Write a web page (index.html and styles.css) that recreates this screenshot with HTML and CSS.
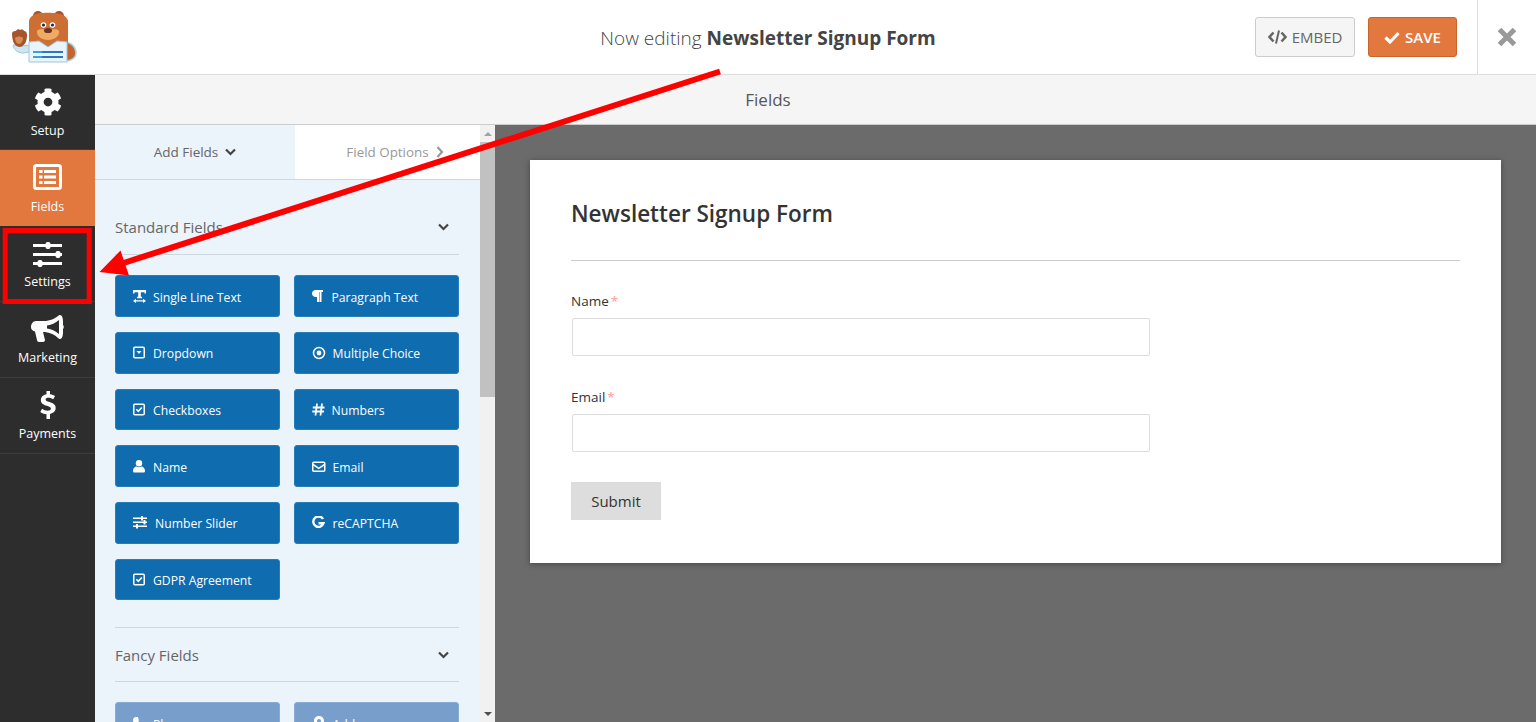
FILE: index.html
```html
<!DOCTYPE html>
<html lang="en">
<head>
    <meta charset="UTF-8">
    <meta name="viewport" content="width=device-width, initial-scale=1.0">
    <title>Newsletter Signup Form</title>
    <link rel="stylesheet" href="styles.css">
</head>
<body>

    <!-- Top bar -->
    <header class="topbar">
        <div class="logo">
            <svg width="96" height="74" viewBox="0 0 96 74">
                <path d="M64 42c8 0 12 6 12 11 0 5-5 8-11 8z" fill="#c4652f" stroke="#a9d3e2" stroke-width="1.5"/>
                <path d="M13 45l9 1 8-1 0 7-7 1c-5 0-9-3-10-8z" fill="#cfe6f0" stroke="#9cc8dc"/>
                <path d="M12 33c1-2 3-2 4-2 1-2 3-2 4-1 2-1 4 0 4 1 2 0 3 2 3 4 0 6-2 11-7 12-5 0-8-5-8-14z" fill="#a5542b"/>
                <path d="M15 38c2-2 6-2 8 0 0 3-2 6-4 6s-4-3-4-6z" fill="#d68a55"/>
                <circle cx="38" cy="16" r="5" fill="#a5542b"/>
                <circle cx="59" cy="16" r="5" fill="#a5542b"/>
                <path d="M34 15c3-3 24-3 29 0 2 1 5 4 5 6v27H29V21c0-2 2-5 5-6z" fill="#cd6f35"/>
                <path d="M37 31c3-3 7-1 11-1s8-2 11 1c1 5-5 9-11 9s-12-4-11-9z" fill="#eeab63"/>
                <circle cx="43.500" cy="25" r="2.800" fill="#fff"/>
                <circle cx="52.500" cy="25" r="2.800" fill="#fff"/>
                <circle cx="43.500" cy="25" r="1.600" fill="#2f2a33"/>
                <circle cx="52.500" cy="25" r="1.600" fill="#2f2a33"/>
                <ellipse cx="48" cy="30.500" rx="4" ry="2.600" fill="#6b3423"/>
                <path d="M29 42l10-1 9 6 9-6 10 1v20H29z" fill="#e8f4fa" stroke="#9cc8dc"/>
                <path d="M33 51h9v2h-9zM33 56h9v2h-9z" fill="#3f9ee0"/>
                <path d="M42 51h21v2H42zM42 56h21v2H42z" fill="#2a78bd"/>
            </svg>
        </div>
        <h1 class="editing">Now editing <strong>Newsletter Signup Form</strong></h1>
        <div class="top-actions">
            <a class="btn btn-embed">
                <svg width="19" height="14" viewBox="0 0 19 14"><path d="M5.500 2.500L1.500 7l4 4.500M13.500 2.500l4 4.500-4 4.500" fill="none" stroke="currentColor" stroke-width="2.500"/><path d="M11 0.500L8 13.500" fill="none" stroke="currentColor" stroke-width="2"/></svg>
                EMBED
            </a>
            <a class="btn btn-save">
                <svg width="16" height="13" viewBox="0 0 16 13"><path d="M1.500 6.500l4.500 4.500 8.500-9" fill="none" stroke="currentColor" stroke-width="3.200"/></svg>
                SAVE
            </a>
            <a class="close-btn">
                <svg width="20" height="20" viewBox="0 0 20 20"><path d="M2.500 2.500l15 15M17.500 2.500l-15 15" fill="none" stroke="currentColor" stroke-width="5"/></svg>
            </a>
        </div>
    </header>

    <div class="builder">

        <!-- Sidebar -->
        <nav class="sidebar">
            <a class="side-item">
                <svg width="28" height="28" viewBox="0 0 512 512"><path fill="currentColor" d="M487.4 315.7l-42.6-24.6c4.3-23.2 4.3-47 0-70.2l42.6-24.6c4.9-2.8 7.1-8.6 5.5-14-11.1-35.6-30-67.8-54.7-94.6-3.8-4.1-10-5.1-14.8-2.3L380.8 110c-17.9-15.4-38.5-27.3-60.8-35.1V25.8c0-5.6-3.9-10.5-9.4-11.7-36.7-8.2-74.3-7.8-109.2 0-5.5 1.2-9.4 6.1-9.4 11.7V75c-22.2 7.9-42.8 19.8-60.8 35.1L88.7 85.500c-4.9-2.8-11-1.900-14.800 2.300-24.700 26.700-43.600 58.900-54.700 94.600-1.700 5.400.6 11.200 5.500 14L67.300 221c-4.300 23.200-4.300 47 0 70.200l-42.600 24.600c-4.900 2.800-7.100 8.600-5.500 14 11.100 35.600 30 67.800 54.700 94.600 3.800 4.100 10 5.100 14.800 2.300l42.600-24.600c17.900 15.400 38.500 27.300 60.800 35.100v49.200c0 5.600 3.900 10.500 9.400 11.700 36.700 8.200 74.300 7.800 109.200 0 5.500-1.200 9.400-6.100 9.400-11.700v-49.200c22.200-7.900 42.800-19.800 60.800-35.100l42.600 24.600c4.900 2.800 11 1.900 14.800-2.300 24.700-26.700 43.600-58.900 54.700-94.600 1.500-5.500-.7-11.300-5.600-14.100zM256 336c-44.100 0-80-35.900-80-80s35.900-80 80-80 80 35.900 80 80-35.900 80-80 80z"/></svg>
                <span>Setup</span>
            </a>
            <a class="side-item active">
                <svg class="i-list" width="29" height="26" viewBox="0 0 29 26"><rect x="1.500" y="1.500" width="26" height="23" rx="2" fill="none" stroke="currentColor" stroke-width="3"/><path fill="currentColor" d="M6 6h3.500v3H6zM11 6h12v3H11zM6 11.500h3.500v3H6zM11 11.500h12v3H11zM6 17h3.500v3H6zM11 17h12v3H11z"/></svg>
                <span>Fields</span>
            </a>
            <a class="side-item">
                <svg width="29" height="26" viewBox="0 0 29 26"><path fill="currentColor" d="M0 3h29v3H0zM0 12h29v3H0zM0 21h29v3H0z"/><rect x="12.500" y="1" width="5" height="7" rx="2" fill="currentColor"/><rect x="22.500" y="10" width="5" height="7" rx="2" fill="currentColor"/><rect x="4.500" y="19" width="5" height="7" rx="2" fill="currentColor"/></svg>
                <span>Settings</span>
            </a>
            <a class="side-item">
                <svg width="33" height="28" viewBox="0 0 33 28"><path fill="currentColor" d="M29 0c2 0 3 3 3 7v3c1 .5 1 3.500 0 4v3c0 4-1 7-3 7-1 0-1.500-.5-2-1-3-3-8-5.500-13-6-1 0-1.500 0-2 0l2 8c0 1-1 2-2 2H8c-1 0-2-1-2-2l-2-8.500C1 16 0 14 0 12c0-3 2-6 5-6h8c6 0 11-2.500 14-5 .5-.5 1-1 2-1zm-1 5c-3 2.500-7 5-12 5.500v3c5 .5 9 3 12 5.500z"/></svg>
                <span>Marketing</span>
            </a>
            <a class="side-item">
                <svg width="16" height="28" viewBox="0 0 16 28"><path fill="currentColor" d="M6.500 0h3.500v3.200c2.200.2 3.900 1 5 1.800l-1.700 3.200c-1.300-.8-3-1.500-4.800-1.500-1.900 0-2.900.7-2.900 1.700 0 1.200 1.200 1.800 3.900 2.700 3.700 1.200 6.200 2.700 6.200 6 0 3-2.100 5.300-5.700 5.800V28H6.500v-4.800c-2.500-.3-4.800-1.100-6.200-2.300l1.800-3.200c1.500 1 3.400 2 5.500 2 2 0 3.300-.8 3.300-2 0-1.300-1.200-2-3.900-2.900C3 13.600.8 12 .8 8.900.8 6 2.900 3.800 6.500 3.200z"/></svg>
                <span>Payments</span>
            </a>
        </nav>

        <div class="workspace">
            <div class="section-title">Fields</div>

            <div class="panes">

                <!-- Fields panel -->
                <aside class="panel">
                    <div class="panel-scroll">
                        <div class="tabs">
                            <a class="tab tab-active">Add Fields
                                <svg width="11" height="8" viewBox="0 0 11 8"><path d="M1 1.500l4.500 4.500L10 1.500" fill="none" stroke="currentColor" stroke-width="2.200"/></svg>
                            </a>
                            <a class="tab tab-options">Field Options
                                <svg width="8" height="12" viewBox="0 0 8 12"><path d="M1.500 1l4.500 5-4.500 5" fill="none" stroke="currentColor" stroke-width="2.200"/></svg>
                            </a>
                        </div>

                        <section class="group">
                            <div class="group-head">
                                <span>Standard Fields</span>
                                <svg width="11" height="8" viewBox="0 0 11 8"><path d="M1 1.500l4.500 4.500L10 1.500" fill="none" stroke="currentColor" stroke-width="2.200"/></svg>
                            </div>
                            <div class="field-grid">
                                <a class="field-btn"><svg width="13" height="13" viewBox="0 0 13 13"><path fill="currentColor" d="M0 0h13v3.500h-1.500V2.200H7.800v4.600H9v1.400H4V6.800h1.200V2.200H1.500v1.300H0zM3 8.800v1.400h7V8.800l3 2.100-3 2.100v-1.400H3V13L0 10.900z"/></svg>Single Line Text</a>
                                <a class="field-btn"><svg class="i-para" width="11" height="12" viewBox="0 0 11 12"><path fill="currentColor" d="M4 0h7v2H9.500v10H7.500V2H7v10H5V7H4C1.500 7 0 5.500 0 3.500S1.500 0 4 0z"/></svg>Paragraph Text</a>
                                <a class="field-btn"><svg width="13" height="13" viewBox="0 0 13 13"><rect x=".75" y="1.250" width="10.500" height="10.500" rx="1" fill="none" stroke="currentColor" stroke-width="1.500"/><path fill="currentColor" d="M3.500 5h5L6 8z"/></svg>Dropdown</a>
                                <a class="field-btn"><svg class="i-wide" width="14" height="14" viewBox="0 0 14 14"><circle cx="7" cy="7" r="5.500" fill="none" stroke="currentColor" stroke-width="1.500"/><circle cx="7" cy="7" r="2.400" fill="currentColor"/></svg>Multiple Choice</a>
                                <a class="field-btn"><svg width="13" height="13" viewBox="0 0 13 13"><rect x=".75" y="1.250" width="10.500" height="10.500" rx="1" fill="none" stroke="currentColor" stroke-width="1.500"/><path d="M3.300 6.300l2 2 3.500-3.800" fill="none" stroke="currentColor" stroke-width="1.600"/></svg>Checkboxes</a>
                                <a class="field-btn"><svg width="13" height="13" viewBox="0 0 13 13"><path d="M5 .5L3.500 12.500M10 .5L8.500 12.500M.8 4.500h11.700M.3 8.500h11.700" fill="none" stroke="currentColor" stroke-width="1.800"/></svg>Numbers</a>
                                <a class="field-btn"><svg width="13" height="13" viewBox="0 0 13 13"><circle cx="6" cy="3.300" r="3.200" fill="currentColor"/><path fill="currentColor" d="M0 11c0-3 2-4.500 3.500-4.500 1.600 1 3.400 1 5 0C10 6.500 12 8 12 11c0 1-.7 1.500-1.500 1.500h-9C.7 12.500 0 12 0 11z"/></svg>Name</a>
                                <a class="field-btn"><svg class="i-wide" width="14" height="13" viewBox="0 0 14 13"><rect x=".75" y="2.250" width="12" height="9" rx="1" fill="none" stroke="currentColor" stroke-width="1.500"/><path d="M1 4.500l5.800 3.800 5.800-3.800" fill="none" stroke="currentColor" stroke-width="1.500"/></svg>Email</a>
                                <a class="field-btn"><svg width="15" height="13" viewBox="0 0 15 13"><path fill="currentColor" d="M0 1.500h14v1.500H0zM0 5.500h14V7H0zM0 9.500h14V11H0zM8 0h2v4.500H8zM10.500 4h2v4.500h-2zM3 8h2v4.500H3z"/></svg>Number Slider</a>
                                <a class="field-btn"><svg class="i-g" width="13" height="13" viewBox="0 0 13 13"><path d="M11 3A5.200 5.200 0 1 0 11.500 7.200H6.500" fill="none" stroke="currentColor" stroke-width="2.400"/></svg>reCAPTCHA</a>
                                <a class="field-btn"><svg width="13" height="13" viewBox="0 0 13 13"><rect x=".75" y="1.250" width="10.500" height="10.500" rx="1" fill="none" stroke="currentColor" stroke-width="1.500"/><path d="M3.300 6.300l2 2 3.500-3.800" fill="none" stroke="currentColor" stroke-width="1.600"/></svg>GDPR Agreement</a>
                            </div>
                        </section>

                        <section class="group group-fancy">
                            <div class="group-head">
                                <span>Fancy Fields</span>
                                <svg width="11" height="8" viewBox="0 0 11 8"><path d="M1 1.500l4.500 4.500L10 1.500" fill="none" stroke="currentColor" stroke-width="2.200"/></svg>
                            </div>
                            <div class="field-grid">
                                <a class="field-btn faded"><svg width="13" height="13" viewBox="0 0 13 13"><path fill="currentColor" d="M3 0l2 0 1 4-1.500 1.500c.7 1.300 1.700 2.300 3 3L9 7l4 1v2c0 1.500-1 3-3 3C4.500 13 0 8.500 0 3c0-2 1.500-3 3-3z"/></svg>Phone</a>
                                <a class="field-btn faded"><svg class="i-wide" width="14" height="14" viewBox="0 0 14 14"><path fill="currentColor" d="M7 0c3 0 5 2.200 5 5 0 3-3 6-5 9-2-3-5-6-5-9 0-2.800 2-5 5-5zm0 3a2 2 0 1 0 0 4 2 2 0 0 0 0-4z"/></svg>Address</a>
                            </div>
                        </section>
                    </div>

                    <div class="scrollbar">
                        <span class="scroll-up"></span>
                        <span class="scroll-thumb"></span>
                        <span class="scroll-track"></span>
                        <span class="scroll-down"></span>
                    </div>
                </aside>

                <!-- Form preview -->
                <main class="preview">
                    <div class="form-card">
                        <h2 class="form-title">Newsletter Signup Form</h2>
                        <div class="form-field">
                            <label>Name<span class="req">*</span></label>
                            <div class="input"></div>
                        </div>
                        <div class="form-field">
                            <label>Email<span class="req">*</span></label>
                            <div class="input"></div>
                        </div>
                        <a class="submit">Submit</a>
                    </div>
                </main>
            </div>
        </div>
    </div>

    <!-- Annotation drawn over the page -->
    <svg class="annotation" width="1536" height="722" viewBox="0 0 1536 722">
        <rect x="5.200" y="230.500" width="84" height="71" fill="none" stroke="#ff0000" stroke-width="5"/>
        <path d="M720 71.500L122 263.500" fill="none" stroke="#ff0000" stroke-width="6"/>
        <path d="M99.500 272L120.500 250.500 129 275.500z" fill="#ff0000"/>
    </svg>

</body>
</html>
```

FILE: styles.css
```css
/* Basic Styles */
* {
    box-sizing: border-box;
}

html, body {
    margin: 0;
    height: 722px;
    overflow: hidden;
}

body {
    position: relative;
    font-family: "Open Sans", "Noto Sans", sans-serif;
    color: #444;
    background: #fff;
}

/* Top bar */
.topbar {
    height: 75px;
    display: grid;
    grid-template-columns: 1fr auto 1fr;
    align-items: center;
    background: #fff;
    border-bottom: 1px solid #ddd;
}

.logo {
    height: 74px;
}

.logo svg {
    display: block;
}

.editing {
    margin: 0;
    padding-top: 1px;
    font-size: 19px;
    font-weight: 300;
    color: #444;
}

.editing strong {
    font-weight: 700;
}

.top-actions {
    display: flex;
    justify-content: flex-end;
    align-items: center;
    height: 74px;
}

.btn {
    height: 40px;
    display: flex;
    align-items: center;
    justify-content: center;
    gap: 5px;
    border-radius: 3px;
    font-size: 15px;
    cursor: pointer;
}

.btn-embed {
    width: 100px;
    background: #f5f5f5;
    border: 1px solid #ccc;
    color: #666;
}

.btn-save {
    width: 89px;
    margin-left: 13px;
    background: #e2783e;
    border: 1px solid #c9652a;
    color: #fff;
    font-weight: 600;
}

.close-btn {
    width: 59px;
    height: 74px;
    margin-left: 20px;
    display: flex;
    align-items: center;
    justify-content: center;
    border-left: 1px solid #ddd;
    color: #999;
}

/* Main area */
.builder {
    display: flex;
    height: 647px;
}

.sidebar {
    width: 95px;
    flex: none;
    background: #2d2d2d;
}

.side-item {
    height: 76px;
    display: flex;
    flex-direction: column;
    align-items: center;
    justify-content: flex-end;
    gap: 6px;
    padding-bottom: 11px;
    border-bottom: 1px solid #3d3d3d;
    color: #fff;
    font-size: 12.5px;
}

.side-item:first-child {
    height: 75px;
    padding-bottom: 10px;
}

.side-item.active {
    padding-bottom: 10px;
    background: #e2783e;
    border-bottom-color: #e2783e;
}

.side-item .i-list {
    margin-bottom: 2px;
}

.workspace {
    flex: 1;
    min-width: 0;
    display: flex;
    flex-direction: column;
}

.section-title {
    height: 50px;
    line-height: 50px;
    padding-right: 95px;
    flex: none;
    text-align: center;
    font-size: 17px;
    color: #555;
    background: #f5f5f5;
    border-bottom: 1px solid #ccc;
}

.panes {
    flex: 1;
    min-height: 0;
    display: flex;
}

/* Fields panel */
.panel {
    width: 400px;
    flex: none;
    display: flex;
    background: #ebf3fb;
}

.panel-scroll {
    width: 385px;
    overflow: hidden;
}

.tabs {
    display: flex;
    height: 55px;
    border-bottom: 1px solid #ced7e0;
}

.tab {
    flex: 1;
    display: flex;
    align-items: center;
    justify-content: center;
    gap: 7px;
    font-size: 13.5px;
    color: #999;
    background: #fff;
}

.tab-active {
    width: 200px;
    flex: none;
    color: #666;
    background: #ebf3fb;
}

.tab-active svg {
    color: #444;
}

.tab-options {
    padding-left: 15px;
    font-size: 13.4px;
}

.group {
    margin: 0 21.5px 0 20px;
    padding-top: 37px;
}

.group-fancy {
    margin-top: 26.5px;
    padding-top: 18px;
    border-top: 1px solid #ced7e0;
}

.group-head {
    height: 38px;
    padding: 0 10px 18px 0;
    display: flex;
    justify-content: space-between;
    align-items: center;
    font-size: 15px;
    color: #666;
    border-bottom: 1px solid #ced7e0;
}

.group-fancy .group-head {
    height: 36px;
    padding-bottom: 17px;
}

.group-head svg {
    color: #444;
}

.field-grid {
    margin-top: 20.3px;
    display: grid;
    grid-template-columns: 165px 165px;
    column-gap: 13.5px;
    row-gap: 15px;
}

.field-btn {
    height: 41.7px;
    display: flex;
    align-items: center;
    padding: 2px 0 0 17px;
    border-radius: 3px;
    border: 1px solid #2a7cb8;
    background: #0f6cae;
    color: #fff;
    font-size: 12.2px;
}

.field-btn svg {
    flex: none;
    margin: -2px 7px 0 0;
}

.field-btn .i-para {
    margin-right: 9px;
}

.field-btn .i-g {
    margin-right: 8px;
}

.field-btn.faded {
    background: #789fcc;
    border-color: #8aacd4;
}

/* Scrollbar */
.scrollbar {
    width: 15px;
    flex: none;
    display: flex;
    flex-direction: column;
    background: #f1f1f1;
}

.scroll-up, .scroll-down {
    height: 17px;
    flex: none;
    display: flex;
    align-items: center;
    justify-content: center;
}

.scroll-up::before {
    content: "";
    border: 4px solid transparent;
    border-top: 0;
    border-bottom: 4px solid #a3a3a3;
}

.scroll-down::before {
    content: "";
    border: 4px solid transparent;
    border-bottom: 0;
    border-top: 4px solid #505050;
}

.scroll-thumb {
    height: 255px;
    flex: none;
    background: #c1c1c1;
}

.scroll-track {
    flex: 1;
}

/* Form preview */
.preview {
    flex: 1;
    min-width: 0;
    padding: 35px 35px 0;
    background: #6b6b6b;
}

.form-card {
    height: 403px;
    padding: 0 41px;
    background: #fff;
    box-shadow: 0 1px 6px rgba(0, 0, 0, 0.35);
}

.form-title {
    height: 101px;
    margin: 0 0 30px;
    padding-top: 38px;
    font-size: 22.5px;
    font-weight: 600;
    line-height: 32px;
    color: #333;
    border-bottom: 1px solid #ccc;
}

.form-field {
    height: 96px;
}

.form-field label {
    display: block;
    height: 27px;
    line-height: 20px;
    font-size: 13.5px;
    font-weight: 500;
    color: #333;
}

.req {
    margin-left: 2px;
    font-weight: 400;
    color: #ff9a9a;
}

.input {
    width: 578px;
    height: 38px;
    margin-left: 1px;
    border: 1px solid #ddd;
    border-radius: 2px;
    background: #fff;
}

.submit {
    width: 90px;
    height: 38px;
    margin-top: -1px;
    display: flex;
    align-items: center;
    justify-content: center;
    font-size: 15px;
    color: #333;
    background: #ddd;
}

/* Arrow and box on top of the page */
.annotation {
    position: absolute;
    left: 0;
    top: 0;
    pointer-events: none;
}
```
